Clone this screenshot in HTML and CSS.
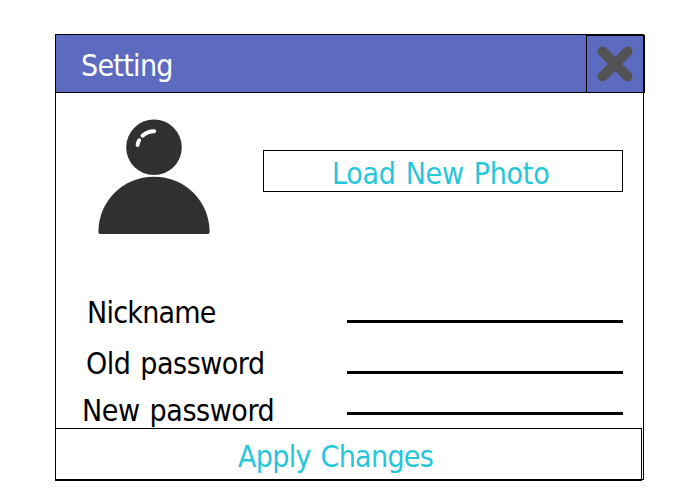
FILE: index.html
```html
<!DOCTYPE html>
<html lang="en">
<head>
<meta charset="utf-8">
<title>Setting</title>
<link rel="stylesheet" href="styles.css">
</head>
<body>
<main class="window">
  <header class="titlebar">
    <h1 class="title">Setting</h1>
    <button class="close" aria-label="Close">
      <svg width="38" height="38" viewBox="0 0 38 38"><path d="M6.500 6.500L31.500 31.500M31.500 6.500L6.500 31.500" fill="none" stroke="#535353" stroke-width="10" stroke-linecap="round"/></svg>
    </button>
  </header>
  <section class="profile">
    <svg class="avatar" width="112" height="116" viewBox="0 0 112 116">
      <circle cx="56" cy="28.3" r="27.8" fill="#303030"/>
      <path d="M.4 113C.4 82 25 57.700 56 57.700S111.600 82 111.600 113Q111.600 115 110 115H2Q.4 115 .4 113Z" fill="#303030"/>
      <path d="M44.500 16.800Q50 12 56.200 12.200M39.600 26Q39.900 23.300 41.200 21.200" fill="none" stroke="#fff" stroke-width="3.900" stroke-linecap="round"/>
    </svg>
    <button class="load">Load New Photo</button>
  </section>
  <form class="fields">
    <div class="row nick"><label class="label">Nickname</label><span class="line"></span></div>
    <div class="row old"><label class="label">Old password</label><span class="line"></span></div>
    <div class="row new"><label class="label">New password</label><span class="line"></span></div>
  </form>
  <button class="apply">Apply Changes</button>
</main>
</body>
</html>
```
FILE: styles.css
```css
* { box-sizing: border-box; }
body {
  margin: 0;
  min-height: 500px;
  padding: 34px 0 0 55px;
  background: #fff;
  color: #000;
  font: 30px/36px "DejaVu Sans Condensed", "DejaVu Sans", sans-serif;
  font-stretch: condensed;
  white-space: nowrap;
}
button {
  margin: 0;
  padding: 0;
  border: 1px solid #000;
  background: #fff;
  color: #26c6da;
  font: inherit;
}
.window {
  display: flex;
  flex-direction: column;
  width: 589px;
  height: 446px;
  border: 1px solid #000;
}
.titlebar {
  display: flex;
  flex: none;
  height: 58px;
  background: #5c6bc0;
  border-bottom: 1px solid #000;
}
.title {
  flex: none;
  width: 530px;
  margin: 0;
  padding: 13px 0 0 25px;
  color: #fff;
  font: inherit;
  letter-spacing: -0.7px;
}
.close {
  display: flex;
  flex: none;
  align-items: center;
  justify-content: center;
  width: 59px;
  height: 58px;
  border-right-width: 2px;
  background: #5c6bc0;
}
.profile {
  display: flex;
  flex: none;
  align-items: flex-start;
  height: 202px;
  padding: 26px 0 0 42px;
}
.avatar { flex: none; }
.load {
  display: flex;
  width: 360px;
  height: 42px;
  margin: 31px 0 0 53px;
  padding: 5px 0 0 68px;
  letter-spacing: -0.28px;
  word-spacing: 1.8px;
}
.fields { display: flex; flex-direction: column; flex: none; height: 133px; }
.row { display: flex; flex: none; }
.nick { height: 51px; }
.old { height: 47px; }
.new { height: 35px; }
.label { flex: none; width: 291px; }
.nick .label { padding-left: 31px; letter-spacing: -0.75px; }
.old .label { padding-left: 30px; letter-spacing: -0.48px; word-spacing: 1.8px; }
.new .label { padding-left: 26px; letter-spacing: -0.42px; word-spacing: 1.8px; }
.line { width: 276px; height: 3px; margin-top: 25px; background: #000; }
.new .line { margin-top: 19px; }
.apply {
  display: flex;
  flex: none;
  width: 587px;
  height: 53px;
  margin-left: -1px;
  padding: 10px 0 0 182px;
  border-bottom-width: 2px;
  letter-spacing: -0.68px;
  word-spacing: 1.8px;
}
```
